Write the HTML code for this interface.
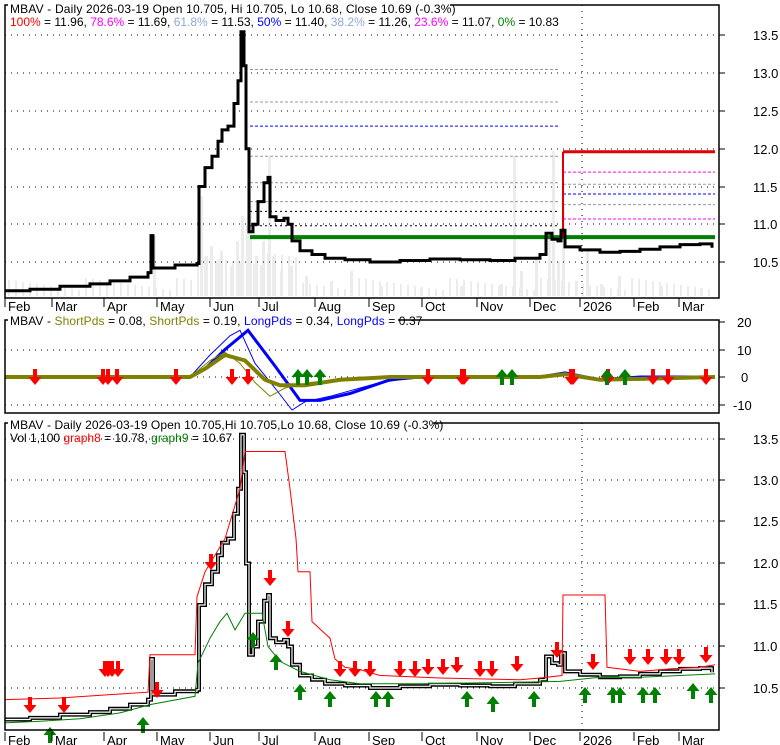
<!DOCTYPE html>
<html><head><meta charset="utf-8"><style>
html,body{margin:0;padding:0;background:#fff;}
svg{display:block;font-family:"Liberation Sans",Arial,sans-serif;font-size:12px;}
</style></head><body>
<svg id="s" width="780" height="745" xmlns="http://www.w3.org/2000/svg">
<rect width="780" height="745" fill="#fff"/>
<g id="vol" fill="#ececec"></g>
<g id="grid" stroke="#000" stroke-width="1" stroke-dasharray="1,5" fill="none"></g>
<g id="fib"></g>
<g id="lines" fill="none"></g>
<g id="arrows"></g>
<g fill="none" stroke="#000" stroke-width="1.5">
<path d="M5,18 V5 H719 V298 H5 Z"/>
<path d="M5,330 V320 H719 V413 H5 Z"/>
<path d="M5,440 V423 H719 V730 H5 Z"/>
</g>
<g id="txt"></g>
<rect x="8" y="0" width="442" height="14" fill="#fff"/>
<text x="10" y="13" fill="#000" letter-spacing="0.17">MBAV - Daily 2026-03-19 Open 10.705, Hi 10.705, Lo 10.68, Close 10.69 (-0.3%)</text>
<text x="10" y="26"><tspan fill="#ff0000">100%</tspan><tspan fill="#000"> = 11.96, </tspan><tspan fill="#ff00ff">78.6%</tspan><tspan fill="#000"> = 11.69, </tspan><tspan fill="#8fa8d8">61.8%</tspan><tspan fill="#000"> = 11.53, </tspan><tspan fill="#0000ff">50%</tspan><tspan fill="#000"> = 11.40, </tspan><tspan fill="#8fa8d8">38.2%</tspan><tspan fill="#000"> = 11.26, </tspan><tspan fill="#ff00ff">23.6%</tspan><tspan fill="#000"> = 11.07, </tspan><tspan fill="#008000">0%</tspan><tspan fill="#000"> = 10.83</tspan></text>
<rect x="8" y="314" width="390" height="13" fill="#fff"/>
<text x="10" y="325" letter-spacing="0.1"><tspan fill="#000">MBAV - </tspan><tspan fill="#808000">ShortPds</tspan><tspan fill="#000"> = 0.08, </tspan><tspan fill="#808000">ShortPds</tspan><tspan fill="#000"> = 0.19, </tspan><tspan fill="#0000ff">LongPds</tspan><tspan fill="#000"> = 0.34, </tspan><tspan fill="#0000ff">LongPds</tspan><tspan fill="#000"> = 0.37</tspan></text>
<rect x="8" y="417" width="425" height="13" fill="#fff"/>
<text x="10" y="429" fill="#000" letter-spacing="0.1">MBAV - Daily 2026-03-19 Open 10.705,Hi 10.705,Lo 10.68, Close 10.69 (-0.3%)</text>
<text x="10" y="442"><tspan fill="#000">Vol 1,100 </tspan><tspan fill="#ff0000">graph8</tspan><tspan fill="#000"> = 10.78, </tspan><tspan fill="#008000">graph9</tspan><tspan fill="#000"> = 10.67</tspan></text>
</svg>
<script>
var NS="http://www.w3.org/2000/svg";
function el(p,t,a,txt){var e=document.createElementNS(NS,t);for(var k in a)e.setAttribute(k,a[k]);if(txt!=null)e.textContent=txt;document.getElementById(p).appendChild(e);return e;}
function yt(p){return 262-(p-10.5)*75.5;}
function yb(p){return 688-(p-10.5)*83;}
var P=[[5,10.12],[30,10.14],[60,10.18],[90,10.21],[110,10.25],[130,10.3],[148,10.36],[151,10.85],[153,10.42],[175,10.46],[197,10.48],[199,11.5],[205,11.75],[212,11.9],[218,12.1],[222,12.25],[228,12.3],[234,12.6],[238,12.9],[241,13.55],[244,13.1],[246,12.0],[249,10.9],[253,11.0],[258,11.3],[264,11.55],[268,11.62],[270,11.1],[276,11.05],[284,11.08],[288,11.0],[292,10.78],[300,10.65],[312,10.6],[325,10.55],[345,10.53],[370,10.5],[400,10.52],[430,10.54],[460,10.53],[490,10.52],[515,10.55],[540,10.6],[546,10.88],[552,10.8],[558,10.78],[561,10.92],[565,10.7],[580,10.66],[600,10.63],[620,10.64],[640,10.67],[660,10.7],[680,10.73],[700,10.74],[712,10.69]];
function pts(f,arr){return arr.map(function(q){return q[0]+","+f(q[1]).toFixed(1)}).join(" ");}
function steps(f,arr){var s=[];for(var i=0;i<arr.length;i++){var q=arr[i];if(i>0)s.push(q[0]+","+f(arr[i-1][1]).toFixed(1));s.push(q[0]+","+f(q[1]).toFixed(1));}return s.join(" ");}
[35,73,111,149,187,224,262].forEach(function(y){el("grid","line",{x1:5,x2:719,y1:y,y2:y});el("txt","line",{x1:719,x2:725,y1:y,y2:y,stroke:"#000"});});
[["13.5",35],["13.0",73],["12.5",111],["12.0",149],["11.5",187],["11.0",224],["10.5",262]].forEach(function(a){el("txt","text",{x:753,y:a[1]+5,"font-size":"13"},a[0]);});
[["20",322],["10",350],["0",377],["-10",405]].forEach(function(a){if(a[0]!="20")el("grid","line",{x1:5,x2:719,y1:a[1],y2:a[1]});el("txt","line",{x1:719,x2:725,y1:a[1],y2:a[1],stroke:"#000"});el("txt","text",{x:a[0]=="-10"?733:(a[0]=="0"?741:737),y:a[1]+5,"font-size":"13"},a[0]);});
[["13.5",439],["13.0",480],["12.5",521],["12.0",563],["11.5",604],["11.0",646],["10.5",688]].forEach(function(a){el("grid","line",{x1:5,x2:719,y1:a[1],y2:a[1]});el("txt","line",{x1:719,x2:725,y1:a[1],y2:a[1],stroke:"#000"});el("txt","text",{x:753,y:a[1]+5,"font-size":"13"},a[0]);});
el("grid","line",{x1:582,x2:582,y1:5,y2:298});el("grid","line",{x1:582,x2:582,y1:423,y2:730});
var M=[["Feb",8],["Mar",55],["Apr",107],["May",160],["Jun",213],["Jul",262],["Aug",318],["Sep",372],["Oct",425],["Nov",480],["Dec",533],["2026",583],["Feb",637],["Mar",682]];
M.forEach(function(m){[311,745].forEach(function(y){el("txt","text",{x:m[1],y:y,"font-size":"13"},m[0]);el("txt","line",{x1:m[1]-3,x2:m[1]-3,y1:y-13,y2:y-4,stroke:"#000"});});});
var V=[[153,60],[200,100],[205,40],[210,50],[215,35],[220,45],[230,30],[236,55],[241,80],[246,70],[249,90],[255,40],[262,55],[268,140],[272,40],[280,25],[290,30],[305,20],[330,15],[350,25],[380,10],[420,8],[460,10],[500,12],[513,140],[520,25],[535,40],[548,60],[552,145],[557,35],[562,90],[575,15],[586,45],[600,12],[618,20],[660,10],[700,8]];
V.forEach(function(v){el("vol","rect",{x:v[0],y:296-v[1],width:3,height:v[1]});});
for(var x=8;x<715;x+=7){var h=6+((x*37)%13);if(x>195&&x<300)h+=25;el("vol","rect",{x:x,y:296-h,width:2,height:h});}
function hl(x1,x2,p,c,w,d){el("fib","line",{x1:x1,x2:x2,y1:yt(p),y2:yt(p),stroke:c,"stroke-width":w,"stroke-dasharray":d||""});}
hl(250,560,13.05,"#999",1,"3,2");hl(250,560,12.62,"#999",1,"3,2");hl(250,560,12.3,"#0000ff",1,"3,2");hl(250,560,11.9,"#999",1,"3,2");hl(250,560,11.55,"#999",1,"3,2");hl(250,560,11.3,"#999",1,"3,2");hl(250,560,11.17,"#000",1,"2,3");hl(250,560,10.98,"#000",1,"2,3");
hl(250,715,10.83,"#008000",4);
hl(563,715,11.96,"#e00000",3);hl(563,715,11.69,"#ff00ff",1,"3,2");hl(563,715,11.53,"#999",1,"3,2");hl(563,715,11.40,"#0000ff",1,"3,2");hl(563,715,11.26,"#999",1,"3,2");hl(563,715,11.07,"#ff00ff",1,"3,2");
el("fib","line",{x1:563,x2:563,y1:yt(11.96),y2:yt(10.83),stroke:"#e00000","stroke-width":2});
el("lines","polyline",{points:steps(yt,P),stroke:"#000","stroke-width":3});
el("lines","polyline",{points:steps(yb,P),stroke:"#000","stroke-width":4});
el("lines","polyline",{points:steps(yb,P),stroke:"#fff","stroke-width":1.2});
var R=[[5,10.36],[60,10.38],[110,10.42],[148,10.45],[150,10.9],[195,10.9],[197,11.6],[205,11.9],[225,12.3],[240,12.9],[245,13.35],[285,13.35],[290,12.9],[296,12.3],[298,11.9],[310,11.9],[312,11.3],[330,11.1],[335,10.85],[345,10.75],[360,10.72],[380,10.65],[440,10.62],[520,10.6],[540,10.62],[562,10.65],[563,11.62],[605,11.62],[607,10.75],[640,10.7],[670,10.73],[700,10.75],[715,10.78]];
el("lines","polyline",{points:pts(yb,R),stroke:"#ff0000","stroke-width":1});
var G=[[5,10.08],[40,10.1],[80,10.13],[120,10.2],[150,10.3],[195,10.4],[198,10.8],[210,11.1],[220,11.3],[227,11.4],[235,11.2],[245,11.4],[262,11.4],[268,11.0],[280,10.82],[300,10.7],[330,10.6],[360,10.55],[420,10.55],[520,10.57],[560,10.58],[600,10.63],[640,10.63],[680,10.65],[715,10.67]];
el("lines","polyline",{points:pts(yb,G),stroke:"#008000","stroke-width":1});
function ym(v){return 377-v*2.75;}
var B=[[5,0],[190,0],[205,3],[225,10],[248,17],[275,4],[300,-8.5],[320,-8.5],[350,-6],[390,-1],[420,0],[540,0],[565,1.5],[600,-1],[640,0],[715,0]];
var B2=[[5,0],[190,0],[210,8],[230,15],[240,17],[255,5],[275,-4],[292,-12],[305,-9],[330,-7],[380,-2],[420,0],[540,0],[565,1.5],[600,-1],[715,0]];
var O=[[5,0],[190,0],[205,3],[225,8],[245,6],[265,-1],[280,-3],[305,-3],[340,-1],[390,0],[540,0],[565,1],[600,-1],[715,0]];
var O2=[[5,0],[190,0],[210,6],[225,9],[240,5],[255,-2],[270,-7],[285,-4],[310,-2],[360,0],[540,0],[565,1],[600,-1],[715,0]];
el("lines","polyline",{points:pts(ym,B2),stroke:"#0000ff","stroke-width":1});
el("lines","polyline",{points:pts(ym,B),stroke:"#0000ff","stroke-width":3});
el("lines","polyline",{points:pts(ym,O2),stroke:"#808000","stroke-width":1});
el("lines","polyline",{points:pts(ym,O),stroke:"#808000","stroke-width":4});
function dn(x,y){el("arrows","path",{d:"M"+(x-2)+","+y+"h4v8h4.5l-6.5,8l-6.5,-8h4.5z",fill:"#ff0000"});}
function up(x,y){el("arrows","path",{d:"M"+x+","+y+"l6.5,8h-4.5v8h-4v-8h-4.5z",fill:"#008000"});}
[35,103,108,117,176,232,248,428,462,464,571,573,608,653,668,706].forEach(function(x){dn(x,369);});
[298,307,320,502,512,607,625].forEach(function(x){up(x,369);});
[[30,697],[64,697],[105,661],[108,661],[112,661],[118,661],[157,682],[211,554],[270,570],[288,621],[340,661],[355,661],[370,661],[400,661],[415,661],[428,659],[443,659],[457,657],[480,661],[492,661],[517,656],[557,642],[593,654],[630,649],[648,649],[666,649],[679,649],[706,647]].forEach(function(a){dn(a[0],a[1]);});
[[50,727],[143,717],[253,632],[276,654],[300,684],[330,691],[376,691],[388,691],[467,691],[493,696],[534,691],[585,687],[613,687],[620,687],[643,687],[655,687],[693,683],[711,687]].forEach(function(a){up(a[0],a[1]);});
</script>
</body></html>
